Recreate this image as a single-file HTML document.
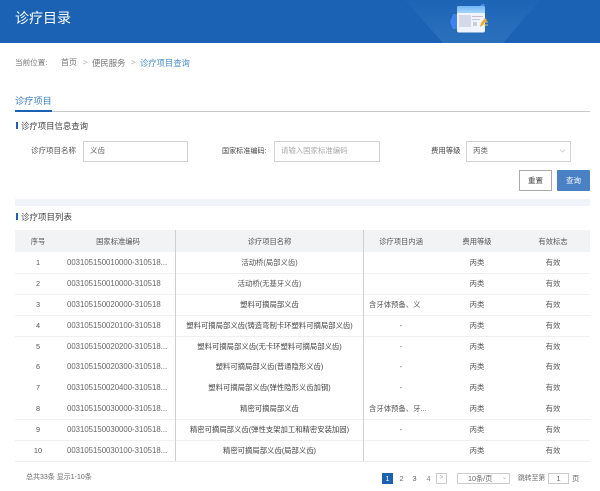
<!DOCTYPE html>
<html lang="zh">
<head>
<meta charset="utf-8">
<title>诊疗目录</title>
<style>
html,body{margin:0;padding:0;background:#fff}
#p{position:relative;width:600px;height:491px;overflow:hidden;background:#fff;font-family:"Liberation Sans","Noto Sans CJK SC",sans-serif;font-size:7.35px;color:#555;filter:blur(.25px)}
#p div{position:absolute;white-space:nowrap}
.t{line-height:12px;height:12px}
.c{text-align:center}
.box{box-sizing:border-box;border:1px solid #d2d2d2;background:#fff}
.bar{background:#1b62b4;width:2px;height:7px}
.hd{top:236px;color:#555;font-size:7.3px}
.ln{left:15px;width:575px;height:1px;background:#f0f0f0}
.k{left:67px;font-size:7.8px;color:#666}
.n{left:176px;width:187px}
.d{left:440px;width:74px}
.e{left:516px;width:74px}
.s{left:15px;width:46px}
.h{left:364px;width:74px}
</style>
</head>
<body>
<div id="p">
<!-- banner -->
<div style="left:0;top:0;width:600px;height:43px;background:#1b62b4"></div>
<svg style="position:absolute;left:0;top:0" width="600" height="43" viewBox="0 0 600 43">
<defs>
<linearGradient id="g" x1="0" y1="0" x2="0" y2="1"><stop offset="0" stop-color="#1d64b5"/><stop offset="1" stop-color="#2b71bd"/></linearGradient>
<linearGradient id="d" x1="0" y1="0" x2="0" y2="1"><stop offset="0" stop-color="#6fb7f7"/><stop offset="1" stop-color="#a9d4fb"/></linearGradient>
</defs>
<polygon points="405,0 540,0 503,43 443,43" fill="url(#g)"/>
<polygon points="453,14 459,14 462,22 459,29 453,29 450,22" fill="#3f82ee"/>
<path d="M477 8 L483 3.500 L485 5 L481 9 Z" fill="#4d8fe8"/>
<rect x="457" y="6" width="28" height="26.500" rx="2" fill="#eef3fc"/>
<path d="M457 13 V8 a2 2 0 0 1 2-2 h24 a2 2 0 0 1 2 2 V13 Z" fill="url(#d)"/>
<rect x="459" y="15" width="12" height="12" fill="#d4d8e8"/>
<rect x="472" y="16" width="11" height="1" fill="#cdb9c6"/>
<rect x="472" y="19" width="8" height="1" fill="#c3c9dc"/>
<rect x="473" y="22" width="4" height="4" fill="#c9cddc"/>
<path d="M480 27 L481 23 L485 18 L487 20 L483 25 Z" fill="#f2aa2a"/>
<path d="M485 22 h3 M484 25 h4" stroke="#f6c55c" stroke-width="1"/>
</svg>
<div class="t" style="left:15px;top:10px;font-size:14px;line-height:16px;height:16px;color:#fff">诊疗目录</div>

<!-- breadcrumb -->
<div class="t" style="left:15px;top:57px;font-size:7.6px;color:#777">当前位置:</div>
<div class="t" style="left:61px;top:57px;font-size:8px;color:#777">首页</div>
<div class="t" style="left:83px;top:57px;font-size:8px;color:#aaa">&gt;</div>
<div class="t" style="left:92px;top:57px;font-size:8.4px;color:#777">便民服务</div>
<div class="t" style="left:131px;top:57px;font-size:8px;color:#aaa">&gt;</div>
<div class="t" style="left:140px;top:57px;font-size:8.3px;color:#4a90d0">诊疗项目查询</div>

<!-- tab -->
<div class="t" style="left:15px;top:95px;font-size:9.2px;color:#3b7fc4">诊疗项目</div>
<div style="left:15px;top:111px;width:575px;height:1px;background:#c9c9c9"></div>
<div style="left:15px;top:110px;width:37px;height:2px;background:#1b62b4"></div>

<!-- search -->
<div class="bar" style="left:16px;top:122px"></div>
<div class="t" style="left:21px;top:120px;font-size:8.4px;color:#444">诊疗项目信息查询</div>
<div class="t" style="left:31px;top:145px;font-size:7.5px;color:#555">诊疗项目名称</div>
<div class="box" style="left:83px;top:141px;width:105px;height:21px"></div>
<div class="t" style="left:90px;top:145px;font-size:7.5px;color:#666">义齿</div>
<div class="t" style="left:222px;top:145px;font-size:7.1px;color:#444">国家标准编码:</div>
<div class="box" style="left:274px;top:141px;width:106px;height:21px"></div>
<div class="t" style="left:281px;top:145px;font-size:7.4px;color:#aaa">请输入国家标准编码</div>
<div class="t" style="left:431px;top:145px;font-size:7.4px;color:#444">费用等级</div>
<div class="box" style="left:466px;top:141px;width:105px;height:21px"></div>
<div class="t" style="left:473px;top:145px;font-size:7.5px;color:#666">丙类</div>
<svg style="position:absolute;left:559px;top:148px" width="7" height="6"><path d="M1 1.500 L3.500 4 L6 1.500" fill="none" stroke="#c9c9c9" stroke-width=".8"/></svg>
<div class="box c t" style="left:519px;top:170px;width:33px;height:21px;line-height:19px;border-color:#aaa;color:#444;font-size:7.5px">重置</div>
<div class="c t" style="left:557px;top:170px;width:33px;height:21px;line-height:21px;background:#4a80c4;border-radius:1px;color:#fff;font-size:7.5px">查询</div>

<div style="left:15px;top:199px;width:575px;height:7px;background:#f0f3f7"></div>

<!-- list -->
<div class="bar" style="left:16px;top:213px"></div>
<div class="t" style="left:21px;top:211px;font-size:8.5px;color:#444">诊疗项目列表</div>

<!-- table -->
<div style="left:15px;top:230px;width:575px;height:22px;background:#f2f3f5"></div>
<div class="ln" style="top:273px"></div>
<div class="ln" style="top:294px"></div>
<div class="ln" style="top:315px"></div>
<div class="ln" style="top:336px"></div>
<div class="ln" style="top:419px"></div>
<div class="ln" style="top:440px"></div>
<div class="ln" style="top:461px;background:#ececec"></div>
<div style="left:175px;top:230px;width:1px;height:231px;background:#cfcfcf"></div>
<div style="left:363px;top:230px;width:1px;height:231px;background:#cfcfcf"></div>

<div class="t c hd s">序号</div>
<div class="t c hd" style="left:61px;width:114px">国家标准编码</div>
<div class="t c hd n">诊疗项目名称</div>
<div class="t c hd h">诊疗项目内涵</div>
<div class="t c hd d">费用等级</div>
<div class="t c hd e">有效标志</div>

<!-- rows -->
<div class="t c s" style="top:257px">1</div><div class="t k" style="top:257px">003105150010000-310518...</div><div class="t c n" style="top:257px">活动桥(局部义齿)</div><div class="t c d" style="top:257px">丙类</div><div class="t c e" style="top:257px">有效</div>

<div class="t c s" style="top:278px">2</div><div class="t k" style="top:278px">003105150010000-310518</div><div class="t c n" style="top:278px">活动桥(无基牙义齿)</div><div class="t c d" style="top:278px">丙类</div><div class="t c e" style="top:278px">有效</div>

<div class="t c s" style="top:299px">3</div><div class="t k" style="top:299px">003105150020000-310518</div><div class="t c n" style="top:299px;color:#444">塑料可摘局部义齿</div><div class="t" style="left:369px;top:299px">含牙体预备、义</div><div class="t c d" style="top:299px">丙类</div><div class="t c e" style="top:299px">有效</div>

<div class="t c s" style="top:320px">4</div><div class="t k" style="top:320px">003105150020100-310518</div><div class="t c n" style="top:320px;color:#444">塑料可摘局部义齿(铸造弯制卡环塑料可摘局部义齿)</div><div class="t c h" style="top:320px">-</div><div class="t c d" style="top:320px">丙类</div><div class="t c e" style="top:320px">有效</div>

<div class="t c s" style="top:341px">5</div><div class="t k" style="top:341px">003105150020200-310518...</div><div class="t c n" style="top:341px;color:#444">塑料可摘局部义齿(无卡环塑料可摘局部义齿)</div><div class="t c h" style="top:341px">-</div><div class="t c d" style="top:341px">丙类</div><div class="t c e" style="top:341px">有效</div>

<div class="t c s" style="top:361px">6</div><div class="t k" style="top:361px">003105150020300-310518...</div><div class="t c n" style="top:361px;color:#444">塑料可摘局部义齿(普通隐形义齿)</div><div class="t c h" style="top:361px">-</div><div class="t c d" style="top:361px">丙类</div><div class="t c e" style="top:361px">有效</div>

<div class="t c s" style="top:382px">7</div><div class="t k" style="top:382px">003105150020400-310518...</div><div class="t c n" style="top:382px;color:#444">塑料可摘局部义齿(弹性隐形义齿加钢)</div><div class="t c h" style="top:382px">-</div><div class="t c d" style="top:382px">丙类</div><div class="t c e" style="top:382px">有效</div>

<div class="t c s" style="top:403px">8</div><div class="t k" style="top:403px">003105150030000-310518...</div><div class="t c n" style="top:403px;color:#444">精密可摘局部义齿</div><div class="t" style="left:369px;top:403px">含牙体预备、牙...</div><div class="t c d" style="top:403px">丙类</div><div class="t c e" style="top:403px">有效</div>

<div class="t c s" style="top:424px">9</div><div class="t k" style="top:424px">003105150030000-310518...</div><div class="t c n" style="top:424px;color:#444">精密可摘局部义齿(弹性支架加工和精密安装加固)</div><div class="t c h" style="top:424px">-</div><div class="t c d" style="top:424px">丙类</div><div class="t c e" style="top:424px">有效</div>

<div class="t c s" style="top:445px">10</div><div class="t k" style="top:445px">003105150030100-310518...</div><div class="t c n" style="top:445px;color:#444">精密可摘局部义齿(局部义齿)</div><div class="t c d" style="top:445px">丙类</div><div class="t c e" style="top:445px">有效</div>

<!-- footer -->
<div class="t" style="left:26px;top:472px;font-size:7px;color:#666">总共33条 显示1-10条</div>
<div class="t c" style="left:382px;top:473px;width:11px;height:11px;line-height:11px;background:#1b62b4;color:#fff">1</div>
<div class="t c" style="left:397px;top:473px;width:9px;line-height:11px;color:#666">2</div>
<div class="t c" style="left:410px;top:473px;width:9px;line-height:11px;color:#666">3</div>
<div class="t c" style="left:424px;top:473px;width:9px;line-height:11px;color:#888">4</div>
<div class="box c" style="left:436px;top:473px;width:11px;height:11px;line-height:9px;font-size:6px;color:#999;border-color:#ccc">&gt;</div>
<div class="box" style="left:457px;top:473px;width:53px;height:11px;line-height:9px;font-size:7.2px;color:#666;padding-left:10px;border-color:#ccc">10条/页</div>
<div class="t" style="left:502px;top:472px;font-size:6px;color:#aaa">⌄</div>
<div class="t" style="left:518px;top:473px;font-size:6.8px;line-height:11px;color:#666">跳转至第</div>
<div class="box c" style="left:548px;top:473px;width:21px;height:11px;line-height:9px;color:#666;border-color:#ccc">1</div>
<div class="t" style="left:572px;top:473px;line-height:11px;color:#666">页</div>
</div>
</body>
</html>
